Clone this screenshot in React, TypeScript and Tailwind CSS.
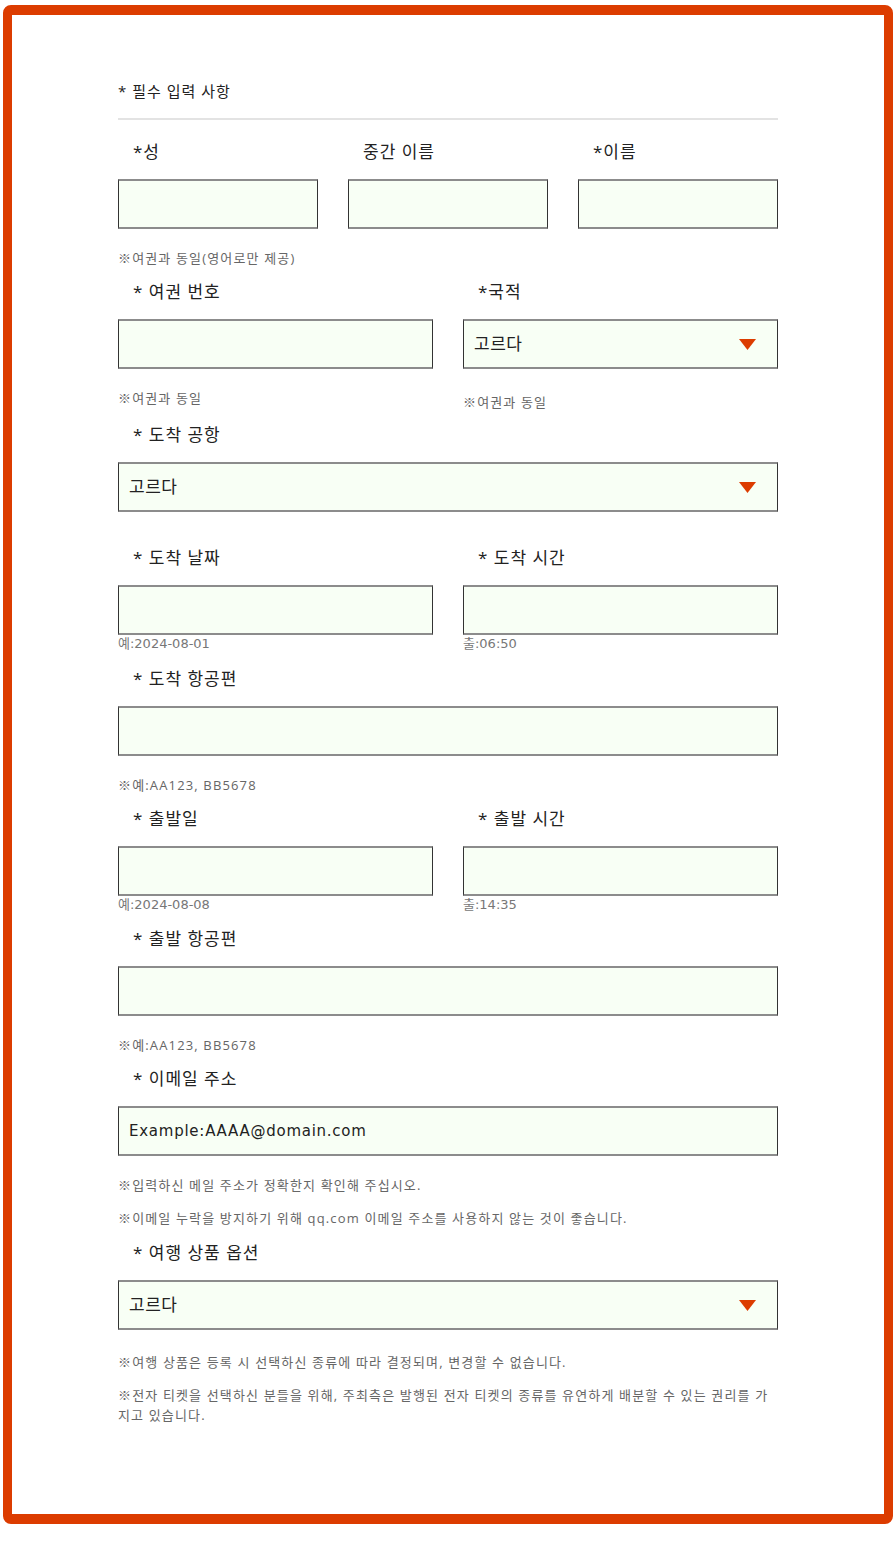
import React from "react";

const FONT = {
  fontFamily: '"Open Sans", "Noto Sans CJK KR", sans-serif',
};

const LATIN = {
  fontFamily: '"DejaVu Sans", "Noto Sans CJK KR", sans-serif',
};

function Label({ children }: { children: React.ReactNode }) {
  return (
    <div className="pl-[15px] text-[17px] leading-[26px] tracking-[1px] text-[#222]">
      {children}
    </div>
  );
}

function Input({ placeholder }: { placeholder?: string }) {
  return (
    <div
      className="mt-[14px] flex h-[50px] items-center border-x border-y-2 border-x-[#333] border-y-[#8c8c8c] bg-[#f8fff5] pl-[10px] text-[15px] tracking-[0.75px] text-[#222]"
      style={LATIN}
    >
      {placeholder}
    </div>
  );
}

function Select() {
  return (
    <div className="mt-[14px] flex h-[50px] items-center justify-between border-x border-y-2 border-x-[#333] border-y-[#8c8c8c] bg-[#f8fff5] pl-[10px] pr-[21px] text-[17px] tracking-[0.5px] text-[#222]">
      <span>고르다</span>
      <svg width="17" height="11" viewBox="0 0 17 11">
        <path d="M0 0H17L8.5 11Z" fill="#dc3c00" />
      </svg>
    </div>
  );
}

function Note({
  children,
  className = "",
}: {
  children: React.ReactNode;
  className?: string;
}) {
  return (
    <div
      className={`text-[13px] leading-[20px] tracking-[1.15px] text-[#666] ${className}`}
    >
      {children}
    </div>
  );
}

function Hint({ children }: { children: React.ReactNode }) {
  return (
    <div className="text-[13px] leading-[18px] text-[#777]" style={LATIN}>
      {children}
    </div>
  );
}

export default function App() {
  return (
    <div className="bg-white pb-[31px] pt-[5px]" style={FONT}>
      <div className="ml-[3px] w-[890px] rounded-[8px] border-x-[9px] border-y-[10px] border-[#dc3c00] bg-white pb-[89px] pt-[66px]">
        <div className="mx-auto w-[660px]">
          <div className="text-[15px] leading-[20px] tracking-[1px] text-[#222]">
            * 필수 입력 사항
          </div>
          <div className="mt-[17px] h-[2px] bg-[#e3e3e3]" />

          {/* 이름 */}
          <div className="mt-[19px] grid grid-cols-3 gap-[30px]">
            <div>
              <Label>*성</Label>
              <Input />
            </div>
            <div>
              <Label>중간 이름</Label>
              <Input />
            </div>
            <div>
              <Label>*이름</Label>
              <Input />
            </div>
          </div>
          <Note className="mt-[19px]">※여권과 동일(영어로만 제공)</Note>

          {/* 여권 / 국적 */}
          <div className="mt-[11px] grid grid-cols-2 gap-[30px]">
            <div>
              <Label>* 여권 번호</Label>
              <Input />
              <Note className="mt-[19px]">※여권과 동일</Note>
            </div>
            <div>
              <Label>*국적</Label>
              <Select />
              <Note className="mt-[23px]">※여권과 동일</Note>
            </div>
          </div>

          <div className="mt-[10px]">
            <Label>* 도착 공항</Label>
            <Select />
          </div>

          <div className="mt-[33px] grid grid-cols-2 gap-[30px]">
            <div>
              <Label>* 도착 날짜</Label>
              <Input />
              <Hint>예:2024-08-01</Hint>
            </div>
            <div>
              <Label>* 도착 시간</Label>
              <Input />
              <Hint>출:06:50</Hint>
            </div>
          </div>

          <div className="mt-[13px]">
            <Label>* 도착 항공편</Label>
            <Input />
            <Note className="mt-[19px]">※예:AA123, BB5678</Note>
          </div>

          <div className="mt-[11px] grid grid-cols-2 gap-[30px]">
            <div>
              <Label>* 출발일</Label>
              <Input />
              <Hint>예:2024-08-08</Hint>
            </div>
            <div>
              <Label>* 출발 시간</Label>
              <Input />
              <Hint>출:14:35</Hint>
            </div>
          </div>

          <div className="mt-[12px]">
            <Label>* 출발 항공편</Label>
            <Input />
            <Note className="mt-[19px]">※예:AA123, BB5678</Note>
          </div>

          <div className="mt-[11px]">
            <Label>* 이메일 주소</Label>
            <Input placeholder="Example:AAAA@domain.com" />
            <Note className="mt-[19px]">
              ※입력하신 메일 주소가 정확한지 확인해 주십시오.
            </Note>
            <Note className="mt-[13px]">
              ※이메일 누락을 방지하기 위해 qq.com 이메일 주소를 사용하지 않는
              것이 좋습니다.
            </Note>
          </div>

          <div className="mt-[12px]">
            <Label>* 여행 상품 옵션</Label>
            <Select />
            <Note className="mt-[22px]">
              ※여행 상품은 등록 시 선택하신 종류에 따라 결정되며, 변경할 수
              없습니다.
            </Note>
            <Note className="mt-[13px]">
              ※전자 티켓을 선택하신 분들을 위해, 주최측은 발행된 전자 티켓의
              종류를 유연하게 배분할 수 있는 권리를 가지고 있습니다.
            </Note>
          </div>
        </div>
      </div>
    </div>
  );
}
